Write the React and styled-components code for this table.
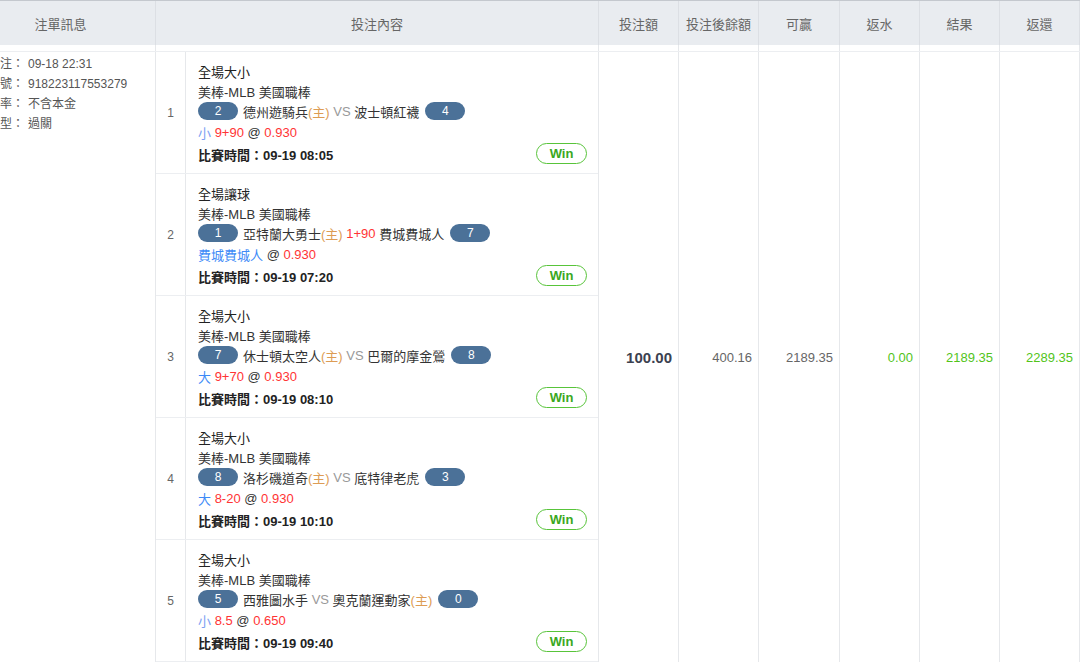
import React from "react";
import styled, { createGlobalStyle } from "styled-components";

const GlobalStyle = createGlobalStyle`
	html, body {
		margin: 0;
		padding: 0;
		background: #fff;
	}
	body {
		font-family: "Liberation Sans", "Noto Sans CJK TC", sans-serif;
		color: #333;
	}
`;

const COLS = "190px 443px 80px 80px 81px 80px 80px 80px";

const Viewport = styled.div`
	width: 1080px;
	height: 665px;
	overflow: hidden;
`;

const Table = styled.div`
	width: 1114px;
	margin-left: -34px;
	border-top: 1px solid #c4c8ce;
`;

const HeadRow = styled.div`
	display: grid;
	grid-template-columns: ${COLS};
	height: 44px;
	background: #e9ecf0;
`;

const HeadCell = styled.div`
	display: flex;
	align-items: center;
	justify-content: center;
	font-size: 13px;
	color: #666;
	border-right: 1px solid #dcdfe4;
`;

const SpacerRow = styled.div`
	display: grid;
	grid-template-columns: ${COLS};
	height: 6px;
	border-bottom: 1px solid #eceef1;
`;

const SpacerCell = styled.div`
	border-right: 1px solid #e6e8eb;
`;

const BodyRow = styled.div`
	display: grid;
	grid-template-columns: ${COLS};
`;

const Cell = styled.div`
	border-right: 1px solid #e6e8eb;
	display: flex;
	align-items: center;
	justify-content: flex-end;
	padding-right: 6px;
	font-size: 13px;
	color: ${(p) => (p.$green ? "#52c41a" : "#666")};
`;

const Amount = styled.span`
	font-size: 15px;
	font-weight: bold;
	color: #3b4150;
`;

const InfoCell = styled.div`
	border-right: 1px solid #e6e8eb;
	padding: 2px 0 0 22px;
	font-size: 12px;
	color: #555;
`;

const InfoLine = styled.div`
	line-height: 20px;
	white-space: nowrap;
`;

const InfoLabel = styled.span`
	margin-right: 4px;
`;

const Slips = styled.div`
	border-right: 1px solid #e6e8eb;
`;

const Slip = styled.div`
	display: grid;
	grid-template-columns: 30px 1fr;
	height: 121px;
	border-bottom: 1px solid #eceef1;
`;

const SlipNo = styled.div`
	display: flex;
	align-items: center;
	justify-content: center;
	border-right: 1px solid #e6e8eb;
	font-size: 12px;
	color: #666;
`;

const SlipBody = styled.div`
	padding: 9px 11px 0 12px;
	font-size: 13px;
	color: #333;
`;

const Line = styled.div`
	display: flex;
	align-items: center;
	height: ${(p) => p.$h || 20}px;
	white-space: nowrap;
	color: ${(p) => p.$color || "#333"};
`;

const TimeLine = styled(Line)`
	justify-content: space-between;
	font-weight: bold;
	color: #222;
`;

const Badge = styled.span`
	display: inline-flex;
	align-items: center;
	justify-content: center;
	width: 40px;
	height: 18px;
	border-radius: 9px;
	background: #4b7198;
	color: #fff;
	font-size: 12px;
	margin-right: ${(p) => (p.$first ? 5 : 0)}px;
	margin-left: ${(p) => (p.$first ? 0 : 6)}px;
`;

const Txt = styled.span`
	color: ${(p) => p.$c || "inherit"};
	white-space: pre;
`;

const WinButton = styled.span`
	display: inline-flex;
	align-items: center;
	justify-content: center;
	width: 49px;
	height: 19px;
	margin-top: -2px;
	border: 1px solid #58c43a;
	border-radius: 11px;
	color: #3aa81e;
	font-size: 13px;
	font-weight: bold;
`;

const RED = "#ff3434";
const HOME = "#dd9c54";
const VS = "#999";

const slips = [
	{
		title: "全場大小",
		home: ["2", "德州遊騎兵", true],
		mid: <Txt $c={VS}> VS </Txt>,
		away: ["波士頓紅襪", "4", false],
		pick: <Txt $c="#7b9ff2">小 </Txt>,
		line: "9+90",
		odds: "0.930",
		time: "09-19 08:05"
	},
	{
		title: "全場讓球",
		home: ["1", "亞特蘭大勇士", true],
		mid: <Txt $c={RED}> 1+90 </Txt>,
		away: ["費城費城人", "7", false],
		pick: <Txt $c="#3d8af7">費城費城人 </Txt>,
		line: null,
		odds: "0.930",
		time: "09-19 07:20"
	},
	{
		title: "全場大小",
		home: ["7", "休士頓太空人", true],
		mid: <Txt $c={VS}> VS </Txt>,
		away: ["巴爾的摩金鶯", "8", false],
		pick: <Txt $c="#3d8af7">大 </Txt>,
		line: "9+70",
		odds: "0.930",
		time: "09-19 08:10"
	},
	{
		title: "全場大小",
		home: ["8", "洛杉磯道奇", true],
		mid: <Txt $c={VS}> VS </Txt>,
		away: ["底特律老虎", "3", false],
		pick: <Txt $c="#3d8af7">大 </Txt>,
		line: "8-20",
		odds: "0.930",
		time: "09-19 10:10"
	},
	{
		title: "全場大小",
		home: ["5", "西雅圖水手", false],
		mid: <Txt $c={VS}> VS </Txt>,
		away: ["奧克蘭運動家", "0", true],
		pick: <Txt $c="#7b9ff2">小 </Txt>,
		line: "8.5",
		odds: "0.650",
		time: "09-19 09:40"
	}
];

const headers = ["注單訊息", "投注內容", "投注額", "投注後餘額", "可贏", "返水", "結果", "返還"];

const info = [
	["下注：", "09-18 22:31"],
	["單號：", "918223117553279"],
	["賠率：", "不含本金"],
	["類型：", "過關"]
];

const SlipItem = ({ no, s }) => (
	<Slip>
		<SlipNo>{no}</SlipNo>
		<SlipBody>
			<Line $color="#222">{s.title}</Line>
			<Line>美棒-MLB 美國職棒</Line>
			<Line>
				<Badge $first>{s.home[0]}</Badge>
				{s.home[1]}
				{s.home[2] && <Txt $c={HOME}>(主)</Txt>}
				{s.mid}
				{s.away[0]}
				{s.away[2] && <Txt $c={HOME}>(主)</Txt>}
				<Badge>{s.away[1]}</Badge>
			</Line>
			<Line $h={23}>
				{s.pick}
				{s.line && <Txt $c={RED}>{s.line} </Txt>}
				<Txt $c="#333">@ </Txt>
				<Txt $c={RED}>{s.odds}</Txt>
			</Line>
			<TimeLine>
				<span>比賽時間：{s.time}</span>
				<WinButton>Win</WinButton>
			</TimeLine>
		</SlipBody>
	</Slip>
);

export default function App() {
	return (
		<Viewport>
			<GlobalStyle />
			<Table>
				<HeadRow>
					{headers.map((h) => (
						<HeadCell key={h}>{h}</HeadCell>
					))}
				</HeadRow>
				<SpacerRow>
					{headers.map((h) => (
						<SpacerCell key={h} />
					))}
				</SpacerRow>
				<BodyRow>
					<InfoCell>
						{info.map(([k, v]) => (
							<InfoLine key={k}>
								<InfoLabel>{k}</InfoLabel>
								{v}
							</InfoLine>
						))}
					</InfoCell>
					<Slips>
						{slips.map((s, i) => (
							<SlipItem key={i} no={i + 1} s={s} />
						))}
					</Slips>
					<Cell>
						<Amount>100.00</Amount>
					</Cell>
					<Cell>400.16</Cell>
					<Cell>2189.35</Cell>
					<Cell $green>0.00</Cell>
					<Cell $green>2189.35</Cell>
					<Cell $green>2289.35</Cell>
				</BodyRow>
			</Table>
		</Viewport>
	);
}
